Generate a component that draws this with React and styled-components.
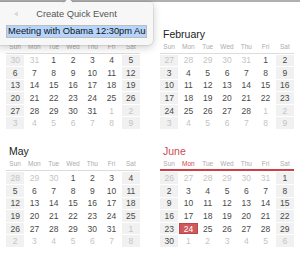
import styled, { createGlobalStyle } from "styled-components";

const GlobalStyle = createGlobalStyle`
  html, body {
    margin: 0;
    padding: 0;
    background: #ffffff;
  }
  body {
    font-family: "Liberation Sans", Arial, sans-serif;
  }
`;

const WEEKDAYS = ["Sun", "Mon", "Tue", "Wed", "Thu", "Fri", "Sat"];

// builds the 6 x 7 grid of a month, starting on the sunday before day 1
function monthDays(year, month) {
  const first = new Date(year, month, 1);
  const start = new Date(year, month, 1 - first.getDay());
  const days = [];
  for (let i = 0; i < 42; i++) {
    const d = new Date(start.getFullYear(), start.getMonth(), start.getDate() + i);
    days.push({
      day: d.getDate(),
      outside: d.getMonth() !== month,
      weekend: i % 7 === 0 || i % 7 === 6,
      key: i,
    });
  }
  return days;
}

const MONTHS = [
  { name: "January", month: 0 },
  { name: "February", month: 1 },
  { name: "May", month: 4 },
  { name: "June", month: 5, current: true, today: 24, todayCol: 1 },
];

export default function App() {
  return (
    <Page>
      <GlobalStyle />
      <TopBar />
      <YearGrid>
        {MONTHS.map((m) => (
          <Month key={m.name}>
            <MonthTitle $current={m.current}>{m.name}</MonthTitle>
            <WeekHeader $current={m.current}>
              {WEEKDAYS.map((w, i) => (
                <WeekLabel key={w} $active={m.current && i === m.todayCol}>
                  {w}
                </WeekLabel>
              ))}
            </WeekHeader>
            <Days>
              {monthDays(2013, m.month).map((d) => (
                <Day
                  key={d.key}
                  $weekend={d.weekend}
                  $outside={d.outside}
                  $today={m.current && !d.outside && d.day === m.today}
                >
                  {d.day}
                </Day>
              ))}
            </Days>
          </Month>
        ))}
      </YearGrid>

      <Popover>
        <PopArrow />
        <PopHeader>
          <BackButton>
            <svg width="6" height="6" viewBox="0 0 6 6">
              <path d="M5 0.5 L0.8 3 L5 5.5 Z" fill="#d9d9d9" />
            </svg>
          </BackButton>
          <PopTitle>Create Quick Event</PopTitle>
          <span />
        </PopHeader>
        <Field>
          <Selected>Meeting with Obama 12:30pm August 5</Selected>
        </Field>
      </Popover>
    </Page>
  );
}

const Page = styled.div`
  position: relative;
  width: 300px;
  height: 258px;
  overflow: hidden;
  background: #ffffff;
`;

const TopBar = styled.div`
  height: 2px;
  background: #b0b0b0;
`;

const YearGrid = styled.div`
  display: grid;
  grid-template-columns: 134px 134px;
  column-gap: 20px;
  row-gap: 16.4px;
  padding: 25.5px 0 0 6px;
`;

const Month = styled.div`
  display: flex;
  flex-direction: column;
`;

const MonthTitle = styled.div`
  font-size: 10.5px;
  line-height: 13px;
  height: 13px;
  margin-bottom: 1px;
  padding-left: 3px;
  color: ${(p) => (p.$current ? "#cc4b4f" : "#222222")};
`;

const WeekHeader = styled.div`
  display: grid;
  grid-template-columns: repeat(7, 1fr);
  column-gap: 1px;
  height: 10px;
  padding-bottom: ${(p) => (p.$current ? "0" : "1px")};
  border-bottom: ${(p) => (p.$current ? "2px solid #cf3f45" : "1px solid #dcdcdc")};
`;

const WeekLabel = styled.span`
  font-size: 6.5px;
  line-height: 10px;
  text-align: center;
  color: ${(p) => (p.$active ? "#cc4b4f" : "#ababab")};
`;

const Days = styled.div`
  display: grid;
  grid-template-columns: repeat(7, 1fr);
  grid-auto-rows: 11.6px;
  gap: 1px;
  margin-top: 1px;
`;

const Day = styled.div`
  display: flex;
  align-items: center;
  justify-content: center;
  font-size: 8.5px;
  box-sizing: border-box;
  background: ${(p) => (p.$today ? "#d0585a" : p.$weekend ? "#f1f1f1" : "transparent")};
  border: ${(p) => (p.$today ? "1px solid #b9474a" : "none")};
  color: ${(p) => (p.$today ? "#ffffff" : p.$outside ? "#c4c4c4" : "#4a4a4a")};
`;

const Popover = styled.div`
  position: absolute;
  left: -4px;
  top: 2px;
  width: 157px;
  box-sizing: border-box;
  padding: 6px 6px 7px 10px;
  background: #f7f7f7;
  border-radius: 0 4px 5px 5px;
  box-shadow: 0 2px 8px rgba(0, 0, 0, 0.22), 0 0 0 1px rgba(0, 0, 0, 0.06);
`;

const PopArrow = styled.div`
  position: absolute;
  left: 68px;
  top: -2px;
  width: 9px;
  height: 9px;
  background: #f7f7f7;
  transform: rotate(45deg);
  box-shadow: -1px -1px 0 rgba(0, 0, 0, 0.06);
`;

const PopHeader = styled.div`
  position: relative;
  display: grid;
  grid-template-columns: 26px 1fr 26px;
  align-items: center;
  height: 12px;
`;

const BackButton = styled.span`
  display: flex;
  align-items: center;
  padding-left: 7px;
`;

const PopTitle = styled.span`
  font-size: 9.3px;
  line-height: 12px;
  color: #555555;
  text-align: center;
  white-space: nowrap;
`;

const Field = styled.div`
  margin-top: 5px;
  height: 13px;
  box-sizing: border-box;
  border: 1px solid #bdbdbd;
  background: #ffffff;
  padding: 0 1px 0 0;
  overflow: hidden;
  white-space: nowrap;
  display: flex;
  align-items: stretch;
`;

const Selected = styled.span`
  background: #b5d5fd;
  color: #111111;
  font-size: 9.3px;
  line-height: 11px;
  padding-left: 1px;
`;
